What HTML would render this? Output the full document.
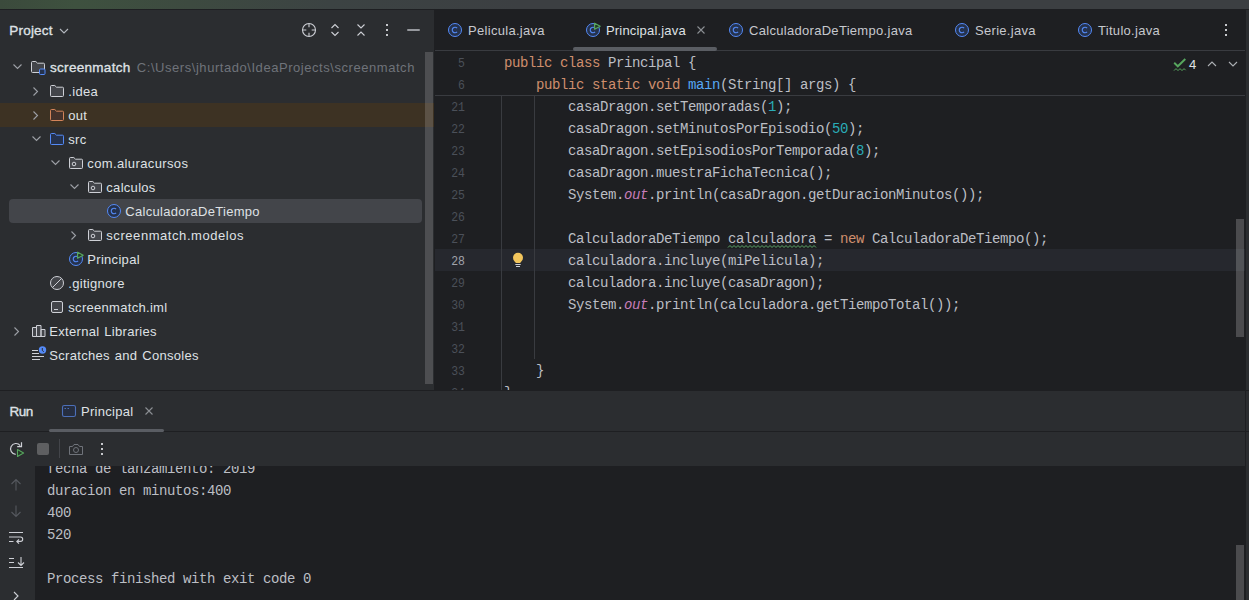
<!DOCTYPE html><html><head><meta charset="utf-8"><style>
*{margin:0;padding:0;box-sizing:border-box}
html,body{width:1249px;height:600px;overflow:hidden;background:#2B2D30;font-family:"Liberation Sans", sans-serif}
.a{position:absolute}
.t{position:absolute;font-family:"Liberation Sans", sans-serif;font-size:13px;letter-spacing:0.3px;word-spacing:1px;color:#DFE1E5;white-space:pre;line-height:24px;height:24px;margin-top:0.5px}
.c{position:absolute;font-family:"Liberation Mono", monospace;font-size:14px;letter-spacing:-0.4px;margin-top:1.3px;color:#BCBEC4;white-space:pre;line-height:22px;height:22px}
.ln{position:absolute;font-family:"Liberation Mono", monospace;font-size:13.33px;margin-top:2.3px;color:#4B5059;white-space:pre;line-height:22px;height:22px;text-align:right;width:40px;transform:scaleX(0.86);transform-origin:100% 50%}
.k{color:#CF8E6D} .n{color:#2AACB8} .f{color:#56A8F5} .s{color:#C77DBA;font-style:italic}
svg{position:absolute;overflow:visible}
</style></head><body>
<div class="a" style="left:0;top:0;width:1249px;height:9px;background:linear-gradient(90deg,#3B4A3C 0px,#3E513F 75px,#3D4A40 190px,#3C4343 330px,#3C3F42 520px,#3C3F42 1249px)"></div>
<div class="a" style="left:0;top:9px;width:1249px;height:1px;background:#1E1F22"></div>
<div class="t" style="left:9.3px;top:18px;font-size:13.5px;letter-spacing:0.2px;-webkit-text-stroke:0.35px #DFE1E5">Project</div>
<svg style="left:59px;top:28px" width="10" height="6"><path d="M1 1 L5 5 L9 1" fill="none" stroke="#B4B8BF" stroke-width="1.1"/></svg>
<svg style="left:301px;top:22px" width="16" height="16"><circle cx="8" cy="8" r="6.5" fill="none" stroke="#CED0D6" stroke-width="1.1"/><path d="M8 2v3.3M8 10.7v3.3M2 8h3.3M10.7 8h3.3" stroke="#CED0D6" stroke-width="1.1"/></svg>
<svg style="left:327px;top:22px" width="16" height="16"><path d="M4.5 6 L8 2.5 L11.5 6 M4.5 10 L8 13.5 L11.5 10" fill="none" stroke="#CED0D6" stroke-width="1.1"/></svg>
<svg style="left:353px;top:22px" width="16" height="16"><path d="M4.5 2.5 L8 6 L11.5 2.5 M4.5 13.5 L8 10 L11.5 13.5" fill="none" stroke="#CED0D6" stroke-width="1.1"/></svg>
<svg style="left:379px;top:22px" width="16" height="16"><path d="M7 2h2v2h-2z M7 7h2v2h-2z M7 12h2v2h-2z" fill="#C6C8CC"/></svg>
<div class="a" style="left:407px;top:29px;width:12.5px;height:2px;background:#96989D;border-radius:1px"></div>
<div class="a" style="left:0;top:103px;width:434px;height:24px;background:#3D3223"></div>
<div class="a" style="left:9px;top:199px;width:413px;height:24px;background:#43454A;border-radius:4px"></div>
<svg style="left:13px;top:64px" width="9" height="6"><path d="M0.5 0.5 L4.5 4.5 L8.5 0.5" fill="none" stroke="#9DA0A6" stroke-width="1.1"/></svg>
<svg style="left:30px;top:59px" width="16" height="16"><path d="M1.5 3.5 a1 1 0 0 1 1 -1 h3.3 l1.7 1.7 h6 a1 1 0 0 1 1 1 v7.3 a1 1 0 0 1 -1 1 h-11 a1 1 0 0 1 -1 -1z" fill="#43454A" stroke="#CED0D6" stroke-width="1"/><rect x="9.5" y="10" width="5.5" height="5.5" rx="1" fill="#25324D" stroke="#548AF7" stroke-width="1"/></svg>
<div class="t" style="left:50px;top:55px;font-size:13.5px;letter-spacing:0.3px;-webkit-text-stroke:0.35px #DFE1E5">screenmatch</div>
<div class="t" style="left:136.8px;top:55px;color:#6F737A;letter-spacing:0.55px">C:\Users\jhurtado\IdeaProjects\screenmatch</div>
<svg style="left:33px;top:87px" width="6" height="9"><path d="M0.5 0.5 L4.5 4.5 L0.5 8.5" fill="none" stroke="#9DA0A6" stroke-width="1.1"/></svg>
<svg style="left:49px;top:83px" width="16" height="16"><path d="M1.5 3.5 a1 1 0 0 1 1 -1 h3.3 l1.7 1.7 h6 a1 1 0 0 1 1 1 v7.3 a1 1 0 0 1 -1 1 h-11 a1 1 0 0 1 -1 -1z" fill="#43454A" stroke="#CED0D6" stroke-width="1"/></svg>
<div class="t" style="left:68.3px;top:79px;">.idea</div>
<svg style="left:33px;top:111px" width="6" height="9"><path d="M0.5 0.5 L4.5 4.5 L0.5 8.5" fill="none" stroke="#9DA0A6" stroke-width="1.1"/></svg>
<svg style="left:49px;top:107px" width="16" height="16"><path d="M1.5 3.5 a1 1 0 0 1 1 -1 h3.3 l1.7 1.7 h6 a1 1 0 0 1 1 1 v7.3 a1 1 0 0 1 -1 1 h-11 a1 1 0 0 1 -1 -1z" fill="#45322B" stroke="#D4845A" stroke-width="1"/></svg>
<div class="t" style="left:68.3px;top:103px;">out</div>
<svg style="left:32px;top:136px" width="9" height="6"><path d="M0.5 0.5 L4.5 4.5 L8.5 0.5" fill="none" stroke="#9DA0A6" stroke-width="1.1"/></svg>
<svg style="left:49px;top:131px" width="16" height="16"><path d="M1.5 3.5 a1 1 0 0 1 1 -1 h3.3 l1.7 1.7 h6 a1 1 0 0 1 1 1 v7.3 a1 1 0 0 1 -1 1 h-11 a1 1 0 0 1 -1 -1z" fill="#25324D" stroke="#548AF7" stroke-width="1"/></svg>
<div class="t" style="left:68.3px;top:127px;">src</div>
<svg style="left:51px;top:160px" width="9" height="6"><path d="M0.5 0.5 L4.5 4.5 L8.5 0.5" fill="none" stroke="#9DA0A6" stroke-width="1.1"/></svg>
<svg style="left:68px;top:155px" width="16" height="16"><path d="M1.5 3.5 a1 1 0 0 1 1 -1 h3.3 l1.7 1.7 h6 a1 1 0 0 1 1 1 v7.3 a1 1 0 0 1 -1 1 h-11 a1 1 0 0 1 -1 -1z" fill="#43454A" stroke="#CED0D6" stroke-width="1"/><circle cx="6" cy="9" r="1.8" fill="none" stroke="#CED0D6" stroke-width="1"/></svg>
<div class="t" style="left:87.3px;top:151px;letter-spacing:0.38px;">com.aluracursos</div>
<svg style="left:70px;top:184px" width="9" height="6"><path d="M0.5 0.5 L4.5 4.5 L8.5 0.5" fill="none" stroke="#9DA0A6" stroke-width="1.1"/></svg>
<svg style="left:87px;top:179px" width="16" height="16"><path d="M1.5 3.5 a1 1 0 0 1 1 -1 h3.3 l1.7 1.7 h6 a1 1 0 0 1 1 1 v7.3 a1 1 0 0 1 -1 1 h-11 a1 1 0 0 1 -1 -1z" fill="#43454A" stroke="#CED0D6" stroke-width="1"/><circle cx="6" cy="9" r="1.8" fill="none" stroke="#CED0D6" stroke-width="1"/></svg>
<div class="t" style="left:106.3px;top:175px;">calculos</div>
<svg style="left:106px;top:203px" width="16" height="16"><circle cx="8" cy="8" r="6.5" fill="#25324D" stroke="#548AF7" stroke-width="1"/><path d="M10.1 6.1 A2.8 2.8 0 1 0 10.1 9.9" fill="none" stroke="#548AF7" stroke-width="1.1"/></svg>
<div class="t" style="left:125.3px;top:199px;">CalculadoraDeTiempo</div>
<svg style="left:71px;top:231px" width="6" height="9"><path d="M0.5 0.5 L4.5 4.5 L0.5 8.5" fill="none" stroke="#9DA0A6" stroke-width="1.1"/></svg>
<svg style="left:87px;top:227px" width="16" height="16"><path d="M1.5 3.5 a1 1 0 0 1 1 -1 h3.3 l1.7 1.7 h6 a1 1 0 0 1 1 1 v7.3 a1 1 0 0 1 -1 1 h-11 a1 1 0 0 1 -1 -1z" fill="#43454A" stroke="#CED0D6" stroke-width="1"/><circle cx="6" cy="9" r="1.8" fill="none" stroke="#CED0D6" stroke-width="1"/></svg>
<div class="t" style="left:106.3px;top:223px;letter-spacing:0.56px;">screenmatch.modelos</div>
<svg style="left:68px;top:251px" width="16" height="16"><circle cx="8" cy="8" r="6.5" fill="#25324D" stroke="#548AF7" stroke-width="1"/><path d="M10.1 6.1 A2.8 2.8 0 1 0 10.1 9.9" fill="none" stroke="#548AF7" stroke-width="1.1"/><path d="M9.6 1.2 L9.6 7.2 L15.2 4.2z" fill="#253627" stroke="#57A65E" stroke-width="1.2" stroke-linejoin="round"/></svg>
<div class="t" style="left:87.3px;top:247px;">Principal</div>
<svg style="left:49px;top:275px" width="16" height="16"><circle cx="8" cy="8" r="6.5" fill="#43454A" stroke="#CED0D6" stroke-width="1"/><path d="M3.5 12.5 L12.5 3.5" stroke="#CED0D6" stroke-width="1"/></svg>
<div class="t" style="left:68.3px;top:271px;">.gitignore</div>
<svg style="left:49px;top:299px" width="16" height="16"><rect x="2.5" y="2.5" width="11" height="11" rx="1.5" fill="#43454A" stroke="#CED0D6" stroke-width="1"/><path d="M5 10.5h4" stroke="#CED0D6" stroke-width="1"/></svg>
<div class="t" style="left:68.3px;top:295px;">screenmatch.iml</div>
<svg style="left:14px;top:327px" width="6" height="9"><path d="M0.5 0.5 L4.5 4.5 L0.5 8.5" fill="none" stroke="#9DA0A6" stroke-width="1.1"/></svg>
<svg style="left:30px;top:323px" width="16" height="16"><path d="M2.5 4.5h4v9h-4z M6.5 2.5h4.5v11h-4.5z M11 6.5h4v7h-4z" fill="#43454A" stroke="#CED0D6" stroke-width="1" stroke-linejoin="round"/></svg>
<div class="t" style="left:49.3px;top:319px;">External Libraries</div>
<svg style="left:30px;top:347px" width="16" height="16"><path d="M2 3.5h6 M2 6.5h7 M2 9.5h12 M2 12.5h8" stroke="#CED0D6" stroke-width="1"/><circle cx="12.5" cy="3" r="3.7" fill="#548AF7"/><path d="M12.3 1v2.5l1.5 1.2" stroke="#2B2D30" stroke-width="1" fill="none"/></svg>
<div class="t" style="left:49.3px;top:343px;">Scratches and Consoles</div>
<div class="a" style="left:425px;top:52px;width:8px;height:332px;background:rgba(255,255,255,0.16)"></div>
<div class="a" style="left:434px;top:10px;width:1px;height:380px;background:#1E1F22"></div>
<div class="a" style="left:0;top:0;width:1249px;height:600px;clip-path:inset(10px 0 210px 435px)">
<div class="a" style="left:435px;top:10px;width:814px;height:380px;background:#1E1F22"></div>
<div class="a" style="left:435px;top:50px;width:814px;height:1px;background:#393B40"></div>
<svg style="left:447px;top:22px" width="16" height="16"><circle cx="8" cy="8" r="6.5" fill="#25324D" stroke="#548AF7" stroke-width="1"/><path d="M10.1 6.1 A2.8 2.8 0 1 0 10.1 9.9" fill="none" stroke="#548AF7" stroke-width="1.1"/></svg>
<div class="t" style="left:468px;top:18px;color:#C6C8CE;">Pelicula.java</div>
<svg style="left:585px;top:22px" width="16" height="16"><circle cx="8" cy="8" r="6.5" fill="#25324D" stroke="#548AF7" stroke-width="1"/><path d="M10.1 6.1 A2.8 2.8 0 1 0 10.1 9.9" fill="none" stroke="#548AF7" stroke-width="1.1"/><path d="M9.6 1.2 L9.6 7.2 L15.2 4.2z" fill="#253627" stroke="#57A65E" stroke-width="1.2" stroke-linejoin="round"/></svg>
<div class="t" style="left:606px;top:18px;color:#DFE1E5;letter-spacing:0.18px;">Principal.java</div>
<svg style="left:728px;top:22px" width="16" height="16"><circle cx="8" cy="8" r="6.5" fill="#25324D" stroke="#548AF7" stroke-width="1"/><path d="M10.1 6.1 A2.8 2.8 0 1 0 10.1 9.9" fill="none" stroke="#548AF7" stroke-width="1.1"/></svg>
<div class="t" style="left:749px;top:18px;color:#C6C8CE;">CalculadoraDeTiempo.java</div>
<svg style="left:954px;top:22px" width="16" height="16"><circle cx="8" cy="8" r="6.5" fill="#25324D" stroke="#548AF7" stroke-width="1"/><path d="M10.1 6.1 A2.8 2.8 0 1 0 10.1 9.9" fill="none" stroke="#548AF7" stroke-width="1.1"/></svg>
<div class="t" style="left:975px;top:18px;color:#C6C8CE;">Serie.java</div>
<svg style="left:1077px;top:22px" width="16" height="16"><circle cx="8" cy="8" r="6.5" fill="#25324D" stroke="#548AF7" stroke-width="1"/><path d="M10.1 6.1 A2.8 2.8 0 1 0 10.1 9.9" fill="none" stroke="#548AF7" stroke-width="1.1"/></svg>
<div class="t" style="left:1098px;top:18px;color:#C6C8CE;">Titulo.java</div>
<svg style="left:697px;top:26px" width="9" height="9"><path d="M0.5 0.5 L7.5 7.5 M7.5 0.5 L0.5 7.5" stroke="#8C8F94" stroke-width="1.1"/></svg>
<div class="a" style="left:573px;top:47px;width:144px;height:4px;background:#5A5D63;border-radius:2px"></div>
<svg style="left:1218px;top:22px" width="16" height="16"><path d="M7 2h2v2h-2z M7 7h2v2h-2z M7 12h2v2h-2z" fill="#C6C8CC"/></svg>
<div class="a" style="left:435px;top:249px;width:811px;height:22px;background:#26282E"></div>
<div class="a" style="left:501px;top:95px;width:1px;height:295px;background:#393B40"></div>
<div class="a" style="left:534px;top:95px;width:1px;height:264px;background:#393B40"></div>
<div class="ln" style="left:425px;top:51px;color:#4B5059">5</div>
<div class="c" style="left:504px;top:51px"><span class="k">public class </span>Principal {</div>
<div class="ln" style="left:425px;top:73px;color:#4B5059">6</div>
<div class="c" style="left:504px;top:73px">    <span class="k">public static void </span><span class="f">main</span>(String[] args) {</div>
<div class="ln" style="left:425px;top:95px;color:#4B5059">21</div>
<div class="c" style="left:504px;top:95px">        casaDragon.setTemporadas(<span class="n">1</span>);</div>
<div class="ln" style="left:425px;top:117px;color:#4B5059">22</div>
<div class="c" style="left:504px;top:117px">        casaDragon.setMinutosPorEpisodio(<span class="n">50</span>);</div>
<div class="ln" style="left:425px;top:139px;color:#4B5059">23</div>
<div class="c" style="left:504px;top:139px">        casaDragon.setEpisodiosPorTemporada(<span class="n">8</span>);</div>
<div class="ln" style="left:425px;top:161px;color:#4B5059">24</div>
<div class="c" style="left:504px;top:161px">        casaDragon.muestraFichaTecnica();</div>
<div class="ln" style="left:425px;top:183px;color:#4B5059">25</div>
<div class="c" style="left:504px;top:183px">        System.<span class="s">out</span>.println(casaDragon.getDuracionMinutos());</div>
<div class="ln" style="left:425px;top:205px;color:#4B5059">26</div>
<div class="c" style="left:504px;top:205px"></div>
<div class="ln" style="left:425px;top:227px;color:#4B5059">27</div>
<div class="c" style="left:504px;top:227px">        CalculadoraDeTiempo calculadora = <span class="k">new </span>CalculadoraDeTiempo();</div>
<div class="ln" style="left:425px;top:249px;color:#A1A3AB">28</div>
<div class="c" style="left:504px;top:249px">        calculadora.incluye(miPelicula);</div>
<div class="ln" style="left:425px;top:271px;color:#4B5059">29</div>
<div class="c" style="left:504px;top:271px">        calculadora.incluye(casaDragon);</div>
<div class="ln" style="left:425px;top:293px;color:#4B5059">30</div>
<div class="c" style="left:504px;top:293px">        System.<span class="s">out</span>.println(calculadora.getTiempoTotal());</div>
<div class="ln" style="left:425px;top:315px;color:#4B5059">31</div>
<div class="c" style="left:504px;top:315px"></div>
<div class="ln" style="left:425px;top:337px;color:#4B5059">32</div>
<div class="c" style="left:504px;top:337px"></div>
<div class="ln" style="left:425px;top:359px;color:#4B5059">33</div>
<div class="c" style="left:504px;top:359px">    }</div>
<div class="ln" style="left:425px;top:381px;color:#4B5059">34</div>
<div class="c" style="left:504px;top:381px">}</div>
<div class="a" style="left:435px;top:95px;width:811px;height:1px;background:#393B40"></div>
<svg style="left:510px;top:251px" width="16" height="18"><circle cx="8" cy="6.8" r="5" fill="#F2C55C"/><rect x="5.5" y="9" width="5" height="3" fill="#F2C55C"/><path d="M5.3 13.5h5.4 M6 15.5h4" stroke="#CED0D6" stroke-width="1"/></svg>
<svg style="left:728px;top:244px" width="89" height="5"><path d="M0 3.5 L2 1.5 L4 3.5 L6 1.5 L8 3.5 L10 1.5 L12 3.5 L14 1.5 L16 3.5 L18 1.5 L20 3.5 L22 1.5 L24 3.5 L26 1.5 L28 3.5 L30 1.5 L32 3.5 L34 1.5 L36 3.5 L38 1.5 L40 3.5 L42 1.5 L44 3.5 L46 1.5 L48 3.5 L50 1.5 L52 3.5 L54 1.5 L56 3.5 L58 1.5 L60 3.5 L62 1.5 L64 3.5 L66 1.5 L68 3.5 L70 1.5 L72 3.5 L74 1.5 L76 3.5 L78 1.5 L80 3.5 L82 1.5 L84 3.5 L86 1.5 L88 3.5" fill="none" stroke="#5DA869" stroke-width="1"/></svg>
<svg style="left:1172px;top:56px" width="16" height="16"><path d="M2.2 6.8 L5.8 10.3 L13.3 3" fill="none" stroke="#57A65E" stroke-width="1.9"/><path d="M2 14.6 L4 12.6 L6 14.6 L8 12.6 L10 14.6 L12 12.6 L13.6 14.2" fill="none" stroke="#57A65E" stroke-width="1"/></svg>
<div class="t" style="left:1189px;top:52px">4</div>
<svg style="left:1207px;top:61px" width="10" height="6"><path d="M1 5 L5 1 L9 5" fill="none" stroke="#ADB0B5" stroke-width="1.1"/></svg>
<svg style="left:1228px;top:61px" width="10" height="6"><path d="M1 1 L5 5 L9 1" fill="none" stroke="#ADB0B5" stroke-width="1.1"/></svg>
<div class="a" style="left:1236px;top:219px;width:8px;height:118px;background:rgba(255,255,255,0.2)"></div>
</div>
<div class="a" style="left:1245px;top:10px;width:1px;height:590px;background:#1E1F22"></div>
<div class="a" style="left:1246px;top:10px;width:3px;height:590px;background:#2B2D30"></div>
<div class="a" style="left:0;top:390px;width:1249px;height:1px;background:#1E1F22"></div>
<div class="t" style="left:9.5px;top:399px;font-size:13.5px;letter-spacing:-0.5px;-webkit-text-stroke:0.35px #DFE1E5">Run</div>
<svg style="left:61px;top:403px" width="16" height="16"><rect x="1.5" y="2.5" width="13" height="11" rx="1.8" fill="#262E40" stroke="#4C6FB8" stroke-width="1.1"/><path d="M3.5 5.5h1.5 M6.5 5.5h1.5" stroke="#4C6FB8" stroke-width="1"/></svg>
<div class="t" style="left:81px;top:399px">Principal</div>
<svg style="left:145px;top:407px" width="9" height="9"><path d="M0.5 0.5 L7.5 7.5 M7.5 0.5 L0.5 7.5" stroke="#8C8F94" stroke-width="1.1"/></svg>
<div class="a" style="left:0;top:431px;width:1249px;height:1px;background:#1E1F22"></div>
<div class="a" style="left:49px;top:429px;width:115px;height:3px;background:#5A5D63;border-radius:2px"></div>
<div class="a" style="left:0;top:0;width:1249px;height:600px;clip-path:inset(466px 0 0 35px)">
<div class="a" style="left:35px;top:466px;width:1211px;height:134px;background:#1E1F22"></div>
<div class="c" style="left:47px;top:457px">fecha de lanzamiento: 2019</div>
<div class="c" style="left:47px;top:479px">duracion en minutos:400</div>
<div class="c" style="left:47px;top:501px">400</div>
<div class="c" style="left:47px;top:523px">520</div>
<div class="c" style="left:47px;top:545px"></div>
<div class="c" style="left:47px;top:567px">Process finished with exit code 0</div>
</div>
<svg style="left:8px;top:441px" width="18" height="18"><path d="M7.7 13.3 A5.4 5.4 0 1 1 12.2 4.6" fill="none" stroke="#CED0D6" stroke-width="1.2"/><path d="M9.2 5.6 H13.5 V1.2" fill="none" stroke="#CED0D6" stroke-width="1.2"/><path d="M9.5 8.6 L9.5 15.4 L15.6 12z" fill="#253627" stroke="#57A65E" stroke-width="1.1" stroke-linejoin="round"/></svg>
<div class="a" style="left:37px;top:443px;width:12px;height:12px;background:#5E5F61;border-radius:2px"></div>
<div class="a" style="left:59px;top:439px;width:1px;height:19px;background:#43454A"></div>
<svg style="left:68px;top:441px" width="16" height="16"><path d="M1.5 5.5 h3 l1.5 -2 h4 l1.5 2 h3 v8 h-13z" fill="none" stroke="#6F737A" stroke-width="1"/><circle cx="8" cy="9" r="2.5" fill="none" stroke="#6F737A"/></svg>
<svg style="left:94px;top:441px" width="16" height="16"><path d="M7 2h2v2h-2z M7 7h2v2h-2z M7 12h2v2h-2z" fill="#C6C8CC"/></svg>
<svg style="left:8px;top:477px" width="16" height="16"><path d="M8 2.5v11 M3.5 7 L8 2.5 L12.5 7" fill="none" stroke="#55585E" stroke-width="1.1"/></svg>
<svg style="left:8px;top:503px" width="16" height="16"><path d="M8 2.5v11 M3.5 9 L8 13.5 L12.5 9" fill="none" stroke="#55585E" stroke-width="1.1"/></svg>
<svg style="left:8px;top:529px" width="16" height="16"><path d="M1 3.5h14 M1 8h11.5 a2.2 2.2 0 0 1 0 4.4 h-3.5 M1 12.5h4.5 M11 10.3 L8.8 12.4 L11 14.6" fill="none" stroke="#CED0D6" stroke-width="1.1"/></svg>
<svg style="left:8px;top:554px" width="16" height="16"><path d="M1 4.5h5 M1 8.5h5 M1 13.5h14 M13 3v8.5 M10 8.5 L13 11.5 L16 8.5" fill="none" stroke="#CED0D6" stroke-width="1.1"/></svg>
<svg style="left:13px;top:591px" width="8" height="10"><path d="M1 1 L5 5 L1 9" fill="none" stroke="#CED0D6" stroke-width="1.1"/></svg>
<div class="a" style="left:1236px;top:545px;width:8px;height:55px;background:rgba(255,255,255,0.2)"></div>
</body></html>
